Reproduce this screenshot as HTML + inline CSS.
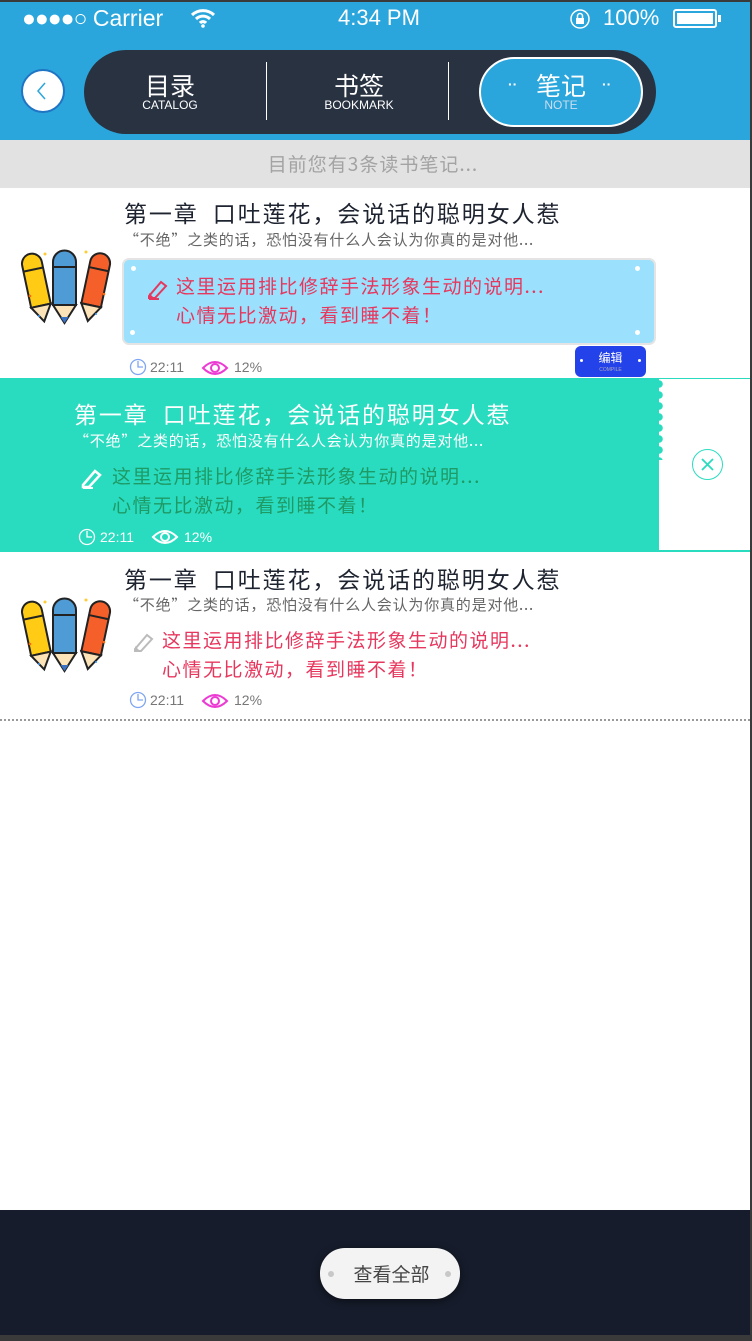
<!DOCTYPE html>
<html><head><meta charset="utf-8">
<style>
*{margin:0;padding:0;box-sizing:border-box}
body{width:752px;height:1341px;overflow:hidden;background:#fff;font-family:"Liberation Sans","Noto Sans CJK SC",sans-serif;position:relative}
.abs{position:absolute}
.t{white-space:nowrap}
.cj{font-family:"Noto Sans CJK SC","Liberation Sans",sans-serif}
.ti{letter-spacing:1.9px;font-size:23px!important}
.su{letter-spacing:0.8px}
.no{letter-spacing:1.5px}
</style></head><body>
<div class="abs" style="left:0;top:0;width:752px;height:140px;background:#2aa6dc"></div>
<div class="abs" style="left:0;top:0;width:752px;height:2px;background:#3a3a3a"></div>
<div class="abs t" style="left:22px;top:5px;color:#fff;font-size:23px;">
<span style="letter-spacing:-1px">●●●●○</span> Carrier</div>
<svg class="abs" style="left:190px;top:8px" width="26" height="20" viewBox="0 0 26 20"><path d="M2 7a16 16 0 0 1 22 0M6 11a10 10 0 0 1 14 0M10 15a4 4 0 0 1 6 0" stroke="#fff" stroke-width="3" fill="none"/><circle cx="13" cy="18" r="1.8" fill="#fff"/></svg>
<div class="abs t" style="left:338px;top:5px;color:#fff;font-size:22px">4:34 PM</div>
<svg class="abs" style="left:569px;top:8px" width="22" height="22" viewBox="0 0 22 22"><circle cx="11" cy="11" r="9" stroke="#fff" stroke-width="1.5" fill="none"/><rect x="7" y="10" width="8" height="6" fill="#fff"/><path d="M8.5 10V8a2.5 2.5 0 0 1 5 0v2" stroke="#fff" stroke-width="1.5" fill="none"/></svg>
<div class="abs t" style="left:603px;top:5px;color:#fff;font-size:22px">100%</div>
<div class="abs" style="left:673px;top:9px;width:44px;height:19px;border:2px solid #fff;border-radius:3px;padding:2px"><div style="background:#fff;width:100%;height:100%"></div></div>
<div class="abs" style="left:718px;top:15px;width:3px;height:7px;background:#fff"></div>

<div class="abs" style="left:21px;top:69px;width:44px;height:44px;border-radius:50%;background:#fff;border:2px solid #1f74c4"></div>
<svg class="abs" style="left:34px;top:80px" width="16" height="22"><path d="M11 3L4 11l7 8" stroke="#2aa6dc" stroke-width="1.5" fill="none"/></svg>
<div class="abs" style="left:84px;top:50px;width:572px;height:84px;border-radius:42px;background:#293241"></div>
<div class="abs t cj" style="left:120px;top:70px;width:100px;text-align:center;color:#fff;font-size:25px;line-height:30px">目录</div>
<div class="abs t" style="left:120px;top:98px;width:100px;text-align:center;color:#fff;font-size:12px">CATALOG</div>
<div class="abs" style="left:266px;top:62px;width:1px;height:58px;background:#fff"></div>
<div class="abs t cj" style="left:309px;top:70px;width:100px;text-align:center;color:#fff;font-size:25px;line-height:30px">书签</div>
<div class="abs t" style="left:309px;top:98px;width:100px;text-align:center;color:#fff;font-size:12px">BOOKMARK</div>
<div class="abs" style="left:448px;top:62px;width:1px;height:58px;background:#fff"></div>
<div class="abs" style="left:479px;top:57px;width:164px;height:70px;border-radius:35px;background:#2aa6dc;border:2px solid #fff"></div>
<div class="abs t cj" style="left:511px;top:70px;width:100px;text-align:center;color:#fff;font-size:25px;line-height:30px">笔记</div>
<div class="abs t" style="left:511px;top:98px;width:100px;text-align:center;color:#cde;font-size:12px">NOTE</div>
<div class="abs t" style="left:508px;top:76px;color:#fff;font-size:14px;font-weight:bold">··</div>
<div class="abs t" style="left:602px;top:76px;color:#fff;font-size:14px;font-weight:bold">··</div>

<div class="abs" style="left:0;top:140px;width:750px;height:48px;background:#e2e2e2"></div>
<div class="abs t cj" style="left:0;top:150px;width:746px;text-align:center;color:#a3a3a3;font-size:19px;letter-spacing:1px">目前您有3条读书笔记...</div>
<div class="abs" style="left:750px;top:0;width:2px;height:1341px;background:#3a3a3a"></div>

<svg width="0" height="0" style="position:absolute"><defs>
<g id="pen">
<g transform="rotate(-12 20 80)"><path d="M8 22a10 10 0 0 1 20 0v43h-20z" fill="#ffcb14" stroke="#222" stroke-width="2"/><path d="M8 28h20" stroke="#222" stroke-width="2"/><path d="M8 65h20l-10 16z" fill="#fde3b8" stroke="#222" stroke-width="2"/></g>
<g transform="rotate(12 62 80)"><path d="M52 22a10 10 0 0 1 20 0v43h-20z" fill="#f5602a" stroke="#222" stroke-width="2"/><path d="M52 28h20" stroke="#222" stroke-width="2"/><path d="M52 65h20l-10 16z" fill="#fde3b8" stroke="#222" stroke-width="2"/></g>
<path d="M27 22a11.5 11.5 0 0 1 23 0v43h-23z" fill="#4e9bd6" stroke="#222" stroke-width="2"/><path d="M27 27h23" stroke="#222" stroke-width="2"/>
<path d="M27 65h23l-11.5 18z" fill="#fde3b8" stroke="#222" stroke-width="2"/><path d="M34.5 77h8l-4 6z" fill="#3b73c2"/>
<circle cx="19" cy="14" r="1.5" fill="#fc3"/><circle cx="60" cy="12" r="1.5" fill="#fc3"/><circle cx="4" cy="56" r="1.3" fill="#f60"/><circle cx="78" cy="54" r="1.3" fill="#f60"/><circle cx="13" cy="76" r="1" fill="#39f"/><circle cx="70" cy="74" r="1" fill="#39f"/>
</g></defs></svg>

<!-- item 1 -->
<svg class="abs" style="left:16px;top:240px" width="100" height="90"><g transform="translate(10,0)"><use href="#pen"/></g></svg>
<div class="abs t cj ti" style="left:124px;top:195px;color:#1e2330">第一章&nbsp;&nbsp;口吐莲花，会说话的聪明女人惹</div>
<div class="abs t cj su" style="left:124px;top:229px;font-size:15px;color:#666">“不绝”之类的话，恐怕没有什么人会认为你真的是对他...</div>
<div class="abs" style="left:122px;top:258px;width:534px;height:87px;border-radius:7px;background:#9be0fc;border:2px solid #e4e4e4"></div>
<div class="abs" style="left:131px;top:266px;width:5px;height:5px;border-radius:50%;background:#fff"></div>
<div class="abs" style="left:635px;top:266px;width:5px;height:5px;border-radius:50%;background:#fff"></div>
<div class="abs" style="left:130px;top:330px;width:5px;height:5px;border-radius:50%;background:#fff"></div>
<div class="abs" style="left:635px;top:330px;width:5px;height:5px;border-radius:50%;background:#fff"></div>
<svg class="abs" style="left:146px;top:277px" width="24" height="24"><path d="M3 19L15 5l5 4L9 21H3z" stroke="#e6385e" stroke-width="2" fill="none"/><path d="M3 16l5 5H3z" fill="#e6385e"/><path d="M3 22h10" stroke="#e6385e" stroke-width="2"/></svg>
<div class="abs t cj no" style="left:176px;top:271px;font-size:19px;color:#e6385e;line-height:29px">这里运用排比修辞手法形象生动的说明...<br>心情无比激动，看到睡不着！</div>
<svg class="abs" style="left:129px;top:358px" width="18" height="18"><circle cx="9" cy="9" r="7.5" stroke="#7fa6f2" stroke-width="1.3" fill="none"/><path d="M9 3v6h5" stroke="#7fa6f2" stroke-width="1.3" fill="none"/></svg>
<div class="abs t" style="left:150px;top:359px;font-size:14px;color:#777">22:11</div>
<svg class="abs" style="left:201px;top:359px" width="28" height="18"><path d="M2 9q12-12 24 0q-12 12-24 0z" stroke="#ec3bd3" stroke-width="2" fill="none"/><circle cx="14" cy="9" r="4" stroke="#ec3bd3" stroke-width="2" fill="none"/></svg>
<div class="abs t" style="left:234px;top:359px;font-size:14px;color:#777">12%</div>
<div class="abs" style="left:575px;top:346px;width:71px;height:31px;border-radius:6px;background:#2442ea"></div>
<div class="abs t cj" style="left:575px;top:349px;width:71px;text-align:center;font-size:12px;color:#fff">编辑</div>
<div class="abs t" style="left:575px;top:367px;width:71px;text-align:center;font-size:5px;color:#aab">COMPILE</div>
<div class="abs" style="left:580px;top:359px;width:3px;height:3px;border-radius:50%;background:#fff"></div>
<div class="abs" style="left:638px;top:359px;width:3px;height:3px;border-radius:50%;background:#fff"></div>

<!-- item 2 -->
<div class="abs" style="left:0;top:378px;width:750px;height:1px;background:#2adcbf"></div>
<div class="abs" style="left:0;top:379px;width:659px;height:173px;background:#2adcbf"></div>
<div class="abs" style="left:0;top:550px;width:750px;height:2px;background:#2adcbf"></div>
<div class="abs" style="left:655px;top:380px;width:8px;height:80px;background:radial-gradient(circle at 4px 4px,#2adcbf 3.5px,transparent 4px) 0 0/8px 11px repeat-y"></div>
<div class="abs" style="left:692px;top:449px;width:31px;height:31px;border-radius:50%;border:1.5px solid #2adcbf"></div>
<svg class="abs" style="left:692px;top:449px" width="31" height="31"><path d="M10 10l11 11M21 10L10 21" stroke="#2adcbf" stroke-width="1.8"/></svg>
<div class="abs t cj ti" style="left:74px;top:396px;color:#fff">第一章&nbsp;&nbsp;口吐莲花，会说话的聪明女人惹</div>
<div class="abs t cj su" style="left:74px;top:430px;font-size:15px;color:#fff">“不绝”之类的话，恐怕没有什么人会认为你真的是对他...</div>
<svg class="abs" style="left:80px;top:466px" width="24" height="24"><path d="M3 19L15 5l5 4L9 21H3z" stroke="#fff" stroke-width="2.5" fill="none"/><path d="M3 22h10" stroke="#fff" stroke-width="2"/></svg>
<div class="abs t cj no" style="left:112px;top:461px;font-size:19px;color:#1e9a66;line-height:29px">这里运用排比修辞手法形象生动的说明...<br>心情无比激动，看到睡不着！</div>
<svg class="abs" style="left:78px;top:528px" width="18" height="18"><circle cx="9" cy="9" r="7.5" stroke="#fff" stroke-width="1.3" fill="none"/><path d="M9 3v6h5" stroke="#fff" stroke-width="1.3" fill="none"/></svg>
<div class="abs t" style="left:100px;top:529px;font-size:14px;color:#fff">22:11</div>
<svg class="abs" style="left:151px;top:528px" width="28" height="18"><path d="M2 9q12-12 24 0q-12 12-24 0z" stroke="#fff" stroke-width="2" fill="none"/><circle cx="14" cy="9" r="4" stroke="#fff" stroke-width="2" fill="none"/></svg>
<div class="abs t" style="left:184px;top:529px;font-size:14px;color:#fff">12%</div>

<!-- item 3 -->
<svg class="abs" style="left:16px;top:588px" width="100" height="90"><g transform="translate(10,0)"><use href="#pen"/></g></svg>
<div class="abs t cj ti" style="left:124px;top:561px;color:#1e2330">第一章&nbsp;&nbsp;口吐莲花，会说话的聪明女人惹</div>
<div class="abs t cj su" style="left:124px;top:594px;font-size:15px;color:#666">“不绝”之类的话，恐怕没有什么人会认为你真的是对他...</div>
<svg class="abs" style="left:132px;top:630px" width="24" height="24"><path d="M3 19L15 5l5 4L9 21H3z" stroke="#bbb" stroke-width="2" fill="none"/><path d="M3 16l5 5H3z" fill="#bbb"/></svg>
<div class="abs t cj no" style="left:162px;top:625px;font-size:19px;color:#e6385e;line-height:29px">这里运用排比修辞手法形象生动的说明...<br>心情无比激动，看到睡不着！</div>
<svg class="abs" style="left:129px;top:691px" width="18" height="18"><circle cx="9" cy="9" r="7.5" stroke="#7fa6f2" stroke-width="1.3" fill="none"/><path d="M9 3v6h5" stroke="#7fa6f2" stroke-width="1.3" fill="none"/></svg>
<div class="abs t" style="left:150px;top:692px;font-size:14px;color:#777">22:11</div>
<svg class="abs" style="left:201px;top:692px" width="28" height="18"><path d="M2 9q12-12 24 0q-12 12-24 0z" stroke="#ec3bd3" stroke-width="2" fill="none"/><circle cx="14" cy="9" r="4" stroke="#ec3bd3" stroke-width="2" fill="none"/></svg>
<div class="abs t" style="left:234px;top:692px;font-size:14px;color:#777">12%</div>
<div class="abs" style="left:0;top:719px;width:750px;height:0;border-top:2px dotted #999"></div>

<!-- footer -->
<div class="abs" style="left:0;top:1210px;width:750px;height:125px;background:#161c2b"></div>
<div class="abs" style="left:0;top:1335px;width:752px;height:6px;background:#3a3a3a"></div>
<div class="abs" style="left:320px;top:1248px;width:140px;height:51px;border-radius:25px;background:#f3f3f3;box-shadow:0 2px 8px rgba(0,0,0,.5)"></div>
<div class="abs" style="left:328px;top:1271px;width:6px;height:6px;border-radius:50%;background:#c8c8c8"></div>
<div class="abs" style="left:445px;top:1271px;width:6px;height:6px;border-radius:50%;background:#c8c8c8"></div>
<div class="abs t cj" style="left:320px;top:1260px;width:143px;text-align:center;font-size:19px;color:#444">查看全部</div>
</body></html>
